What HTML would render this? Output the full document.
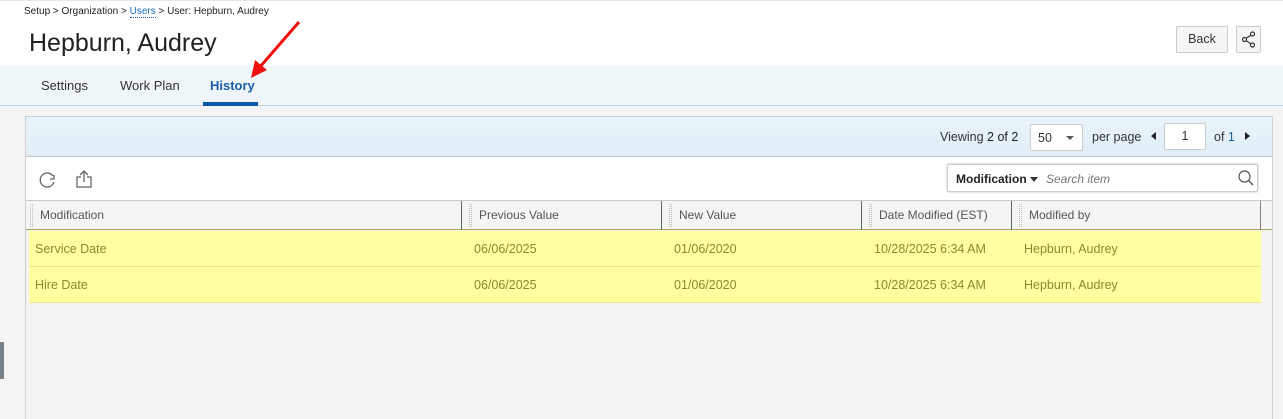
<!DOCTYPE html>
<html><head><style>
*{box-sizing:border-box;margin:0;padding:0}
body{width:1283px;height:419px;overflow:hidden;background:#f4f4f4;font-family:"Liberation Sans",sans-serif;color:#333;position:relative}
.abs{position:absolute}
.top{left:0;top:0;width:1283px;height:66px;background:#fff;border-top:1px solid #e6e6e6}
.tabs{left:0;top:66px;width:1283px;height:40px;background:#eff6fa;border-bottom:1px solid #c5d3dc}
.tab{top:12px;font-size:13px;color:#333}
.panel{left:25px;top:116px;width:1248px;height:303px;background:#f3f3f3;border:1px solid #cfcfcf;border-bottom:none}
.pager{left:0;top:0;width:1246px;height:40px;background:linear-gradient(#e9f3f9,#e1eef6);border-bottom:1px solid #c2c8cc}
.tool{left:0;top:40px;width:1246px;height:44px;background:#fff;border-bottom:1px solid #c9c9c9}
.hdr{left:0;top:84px;width:1246px;height:29px;background:#f5f5f5;border-bottom:1px solid #a8a85a}
.hc{top:7px;font-size:12px;color:#555}
.sep{top:0;width:1px;height:29px;background:#5a6a5a}
.grip{top:3px;width:3px;height:23px;border-left:1px dotted #bbb;border-right:1px dotted #bbb}
.row{left:0;width:1232px;height:36px;background:#ffffa0;border-bottom:1px solid #e8e88a}
.rc{top:11px;font-size:12.5px;color:#8a8a30}
.box{background:#fff;border:1px solid #ccc;border-radius:2px}
</style></head><body>
<div class="abs top">
 <div class="abs" style="left:24px;top:5px;font-size:10px;color:#222">Setup &gt; Organization &gt; <span style="color:#1a6ab8;border-bottom:1px dotted #1a6ab8">Users</span> &gt; User: Hepburn, Audrey</div>
 <div class="abs" style="left:29px;top:28px;font-size:25px;color:#222">Hepburn, Audrey</div>
 <div class="abs" style="left:1176px;top:25px;width:52px;height:27px;background:#f5f5f5;border:1px solid #ccc;border-radius:2px;font-size:12.5px;text-align:center;line-height:25px">Back</div>
 <div class="abs" style="left:1236px;top:25px;width:25px;height:27px;background:#f5f5f5;border:1px solid #ccc;border-radius:2px">
  <svg width="23" height="25" viewBox="0 0 23 25"><g fill="none" stroke="#333" stroke-width="1.2"><circle cx="15.5" cy="7" r="2"/><circle cx="7.5" cy="12.5" r="2"/><circle cx="15.5" cy="18" r="2"/><path d="M9.2 11.3L13.8 8.2M9.2 13.7L13.8 16.8"/></g></svg>
 </div>
</div>
<div class="abs tabs">
 <div class="abs tab" style="left:41px">Settings</div>
 <div class="abs tab" style="left:120px">Work Plan</div>
 <div class="abs tab" style="left:210px;color:#1a5fa8;font-weight:bold">History</div>
 <div class="abs" style="left:203px;top:36px;width:55px;height:4px;background:#0b5aa5"></div>
</div>
<svg class="abs" style="left:245px;top:18px" width="60" height="62"><path d="M54 4L14 50" stroke="#f01010" stroke-width="3"/><path d="M6 60L10 42L22 52Z" fill="#f01010"/></svg>
<div class="abs" style="left:0;top:342px;width:4px;height:37px;background:#7a7f88"></div>
<div class="abs panel">
 <div class="abs pager">
  <div class="abs" style="left:914px;top:13px;font-size:12.5px">Viewing <span style="color:#222">2 of 2</span></div>
  <div class="abs box" style="left:1004px;top:7px;width:53px;height:27px;font-size:12.5px;padding:6px 0 0 7px">50<span style="position:absolute;right:8px;top:11px;border:4px solid transparent;border-top:4px solid #555;border-bottom:0"></span></div>
  <div class="abs" style="left:1066px;top:13px;font-size:12.5px">per page</div>
  <div class="abs" style="left:1125px;top:15px;border:4px solid transparent;border-right:5px solid #222;border-left:0"></div>
  <div class="abs box" style="left:1138px;top:6px;width:42px;height:27px;font-size:12.5px;text-align:center;line-height:25px">1</div>
  <div class="abs" style="left:1188px;top:13px;font-size:12.5px">of <span style="color:#1a5fa8">1</span></div>
  <div class="abs" style="left:1219px;top:15px;border:4px solid transparent;border-left:5px solid #222;border-right:0"></div>
 </div>
 <div class="abs tool">
  <svg class="abs" style="left:11px;top:13px" width="20" height="20"><path d="M16 6A7 7 0 1 0 17 12" fill="none" stroke="#666" stroke-width="1.3"/><path d="M13 9L17 9L17 5" fill="none" stroke="#666" stroke-width="1.3"/></svg>
  <svg class="abs" style="left:48px;top:12px" width="20" height="20"><path d="M7 8H3V18H17V8H13M10 13V2M6 6L10 2L14 6" fill="none" stroke="#666" stroke-width="1.3"/></svg>
  <div class="abs box" style="left:921px;top:7px;width:311px;height:28px;box-shadow:0 0 2px #bbb">
   <div class="abs" style="left:8px;top:7px;font-size:12px;font-weight:bold;color:#222">Modification</div>
   <div class="abs" style="left:82px;top:12px;border:4px solid transparent;border-top:5px solid #333;border-bottom:0"></div>
   <div class="abs" style="left:98px;top:7px;font-size:12px;font-style:italic;color:#777">Search item</div>
   <svg class="abs" style="left:289px;top:4px" width="18" height="18"><circle cx="7.5" cy="7.5" r="5.5" fill="none" stroke="#555" stroke-width="1.2"/><path d="M11.5 11.5L16 16" stroke="#555" stroke-width="1.3"/></svg>
  </div>
 </div>
 <div class="abs hdr">
  <div class="abs grip" style="left:4px"></div>
  <div class="abs hc" style="left:14px">Modification</div>
  <div class="abs grip" style="left:443px"></div>
  <div class="abs hc" style="left:453px">Previous Value</div>
  <div class="abs grip" style="left:643px"></div>
  <div class="abs hc" style="left:653px">New Value</div>
  <div class="abs grip" style="left:843px"></div>
  <div class="abs hc" style="left:853px">Date Modified (EST)</div>
  <div class="abs grip" style="left:993px"></div>
  <div class="abs hc" style="left:1003px">Modified by</div>
  <div class="abs sep" style="left:435px"></div>
  <div class="abs sep" style="left:635px"></div>
  <div class="abs sep" style="left:835px"></div>
  <div class="abs sep" style="left:985px"></div>
  <div class="abs sep" style="left:1234px;background:#8a7a8a"></div>
 </div>
 <div class="abs row" style="top:114px;left:3px">
  <div class="abs rc" style="left:6px">Service Date</div><div class="abs rc" style="left:445px">06/06/2025</div><div class="abs rc" style="left:645px">01/06/2020</div><div class="abs rc" style="left:845px">10/28/2025 6:34 AM</div><div class="abs rc" style="left:995px">Hepburn, Audrey</div>
 </div>
 <div class="abs row" style="top:150px;left:3px">
  <div class="abs rc" style="left:6px">Hire Date</div><div class="abs rc" style="left:445px">06/06/2025</div><div class="abs rc" style="left:645px">01/06/2020</div><div class="abs rc" style="left:845px">10/28/2025 6:34 AM</div><div class="abs rc" style="left:995px">Hepburn, Audrey</div>
 </div>
</div>
</body></html>
